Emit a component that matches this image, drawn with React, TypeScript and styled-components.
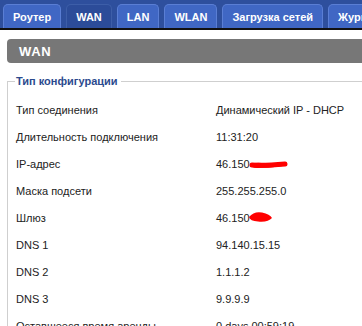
import React from "react";
import styled, { createGlobalStyle } from "styled-components";

const Global = createGlobalStyle`
  html, body { margin: 0; padding: 0; background: #fff; overflow: hidden; }
  body { font-family: "Liberation Sans", Arial, sans-serif; }
`;

const Page = styled.div`
  width: 362px;
  height: 326px;
  overflow: hidden;
`;

const TabBar = styled.div`
  display: flex;
  gap: 5px;
  height: 24px;
  padding: 4px 0 0 3px;
  background: #2e4f9d;
  border-bottom: 2px solid #111;
  overflow: hidden;
  white-space: nowrap;
`;

const Tab = styled.div<{ $active?: boolean }>`
  flex: none;
  height: 24px;
  box-sizing: border-box;
  padding: 0 9px;
  display: flex;
  align-items: center;
  border: 1px solid ${(p) => (p.$active ? "#3d5ea8" : "#5a7ed4")};
  border-bottom: none;
  border-radius: 5px 5px 0 0;
  background: ${(p) => (p.$active ? "#2c4c99" : "#4067c4")};
  color: #fff;
  font-weight: bold;
  font-size: 11px;
`;

const Content = styled.div`
  padding: 9px 0 0 7px;
`;

const SectionHeader = styled.div`
  height: 24px;
  margin-right: -10px;
  border-radius: 4px 0 0 4px;
  background: #777777;
  color: #fff;
  font-weight: bold;
  font-size: 13px;
  letter-spacing: 0.6px;
  display: flex;
  align-items: center;
  padding-left: 12px;
`;

const Fieldset = styled.fieldset`
  margin: 12px -30px 0 0;
  padding: 8px 0 0 8px;
  border: 1px solid #cfcfcf;
  min-width: 0;
`;

const Legend = styled.legend`
  padding: 0 3px 0 1px;
  margin-left: -1px;
  color: #2b4a8e;
  font-weight: bold;
  font-size: 11px;
  line-height: 13px;
`;

const Row = styled.div`
  display: grid;
  grid-template-columns: 200px 1fr;
  height: 27px;
  align-items: center;
  font-size: 11px;
  color: #222;
  white-space: nowrap;
`;

const Value = styled.span`
  display: inline-flex;
  align-items: center;
`;

const Scribble = styled.svg`
  flex: none;
`;

const RedactLong = () => (
  <Scribble width="40" height="12" viewBox="0 0 40 12" style={{ marginLeft: -1, marginTop: 2 }}>
    <path d="M1 5 Q8 3 16 4.5 T30 4 Q35 3 38 4.5 Q36 7 30 7.5 Q20 9 8 9 Q2 9 1 5Z" fill="#f00" />
    <path d="M3 6 Q14 7 36 5" stroke="#f00" strokeWidth="5" strokeLinecap="round" fill="none" />
  </Scribble>
);

const RedactShort = () => (
  <Scribble width="26" height="12" viewBox="0 0 26 12" style={{ marginLeft: -2, marginTop: -1 }}>
    <path d="M1 6 Q6 0 14 1.5 Q22 3 24 7 Q20 11.5 10 10.5 Q2 10 1 6Z" fill="#f00" />
  </Scribble>
);

const tabs = ["Роутер", "WAN", "LAN", "WLAN", "Загрузка сетей", "Журнал"];

const rows: [string, React.ReactNode][] = [
  ["Тип соединения", "Динамический IP - DHCP"],
  ["Длительность подключения", "11:31:20"],
  ["IP-адрес", <Value>46.150<RedactLong /></Value>],
  ["Маска подсети", "255.255.255.0"],
  ["Шлюз", <Value>46.150<RedactShort /></Value>],
  ["DNS 1", "94.140.15.15"],
  ["DNS 2", "1.1.1.2"],
  ["DNS 3", "9.9.9.9"],
  ["Оставшееся время аренды", "0 days 00:59:19"],
];

export default function App() {
  return (
    <Page>
      <Global />
      <TabBar>
        {tabs.map((t) => (
          <Tab key={t} $active={t === "WAN"}>
            {t}
          </Tab>
        ))}
      </TabBar>
      <Content>
        <SectionHeader>WAN</SectionHeader>
        <Fieldset>
          <Legend>Тип конфигурации</Legend>
          {rows.map(([label, value]) => (
            <Row key={label}>
              <span>{label}</span>
              <span>{value}</span>
            </Row>
          ))}
        </Fieldset>
      </Content>
    </Page>
  );
}
